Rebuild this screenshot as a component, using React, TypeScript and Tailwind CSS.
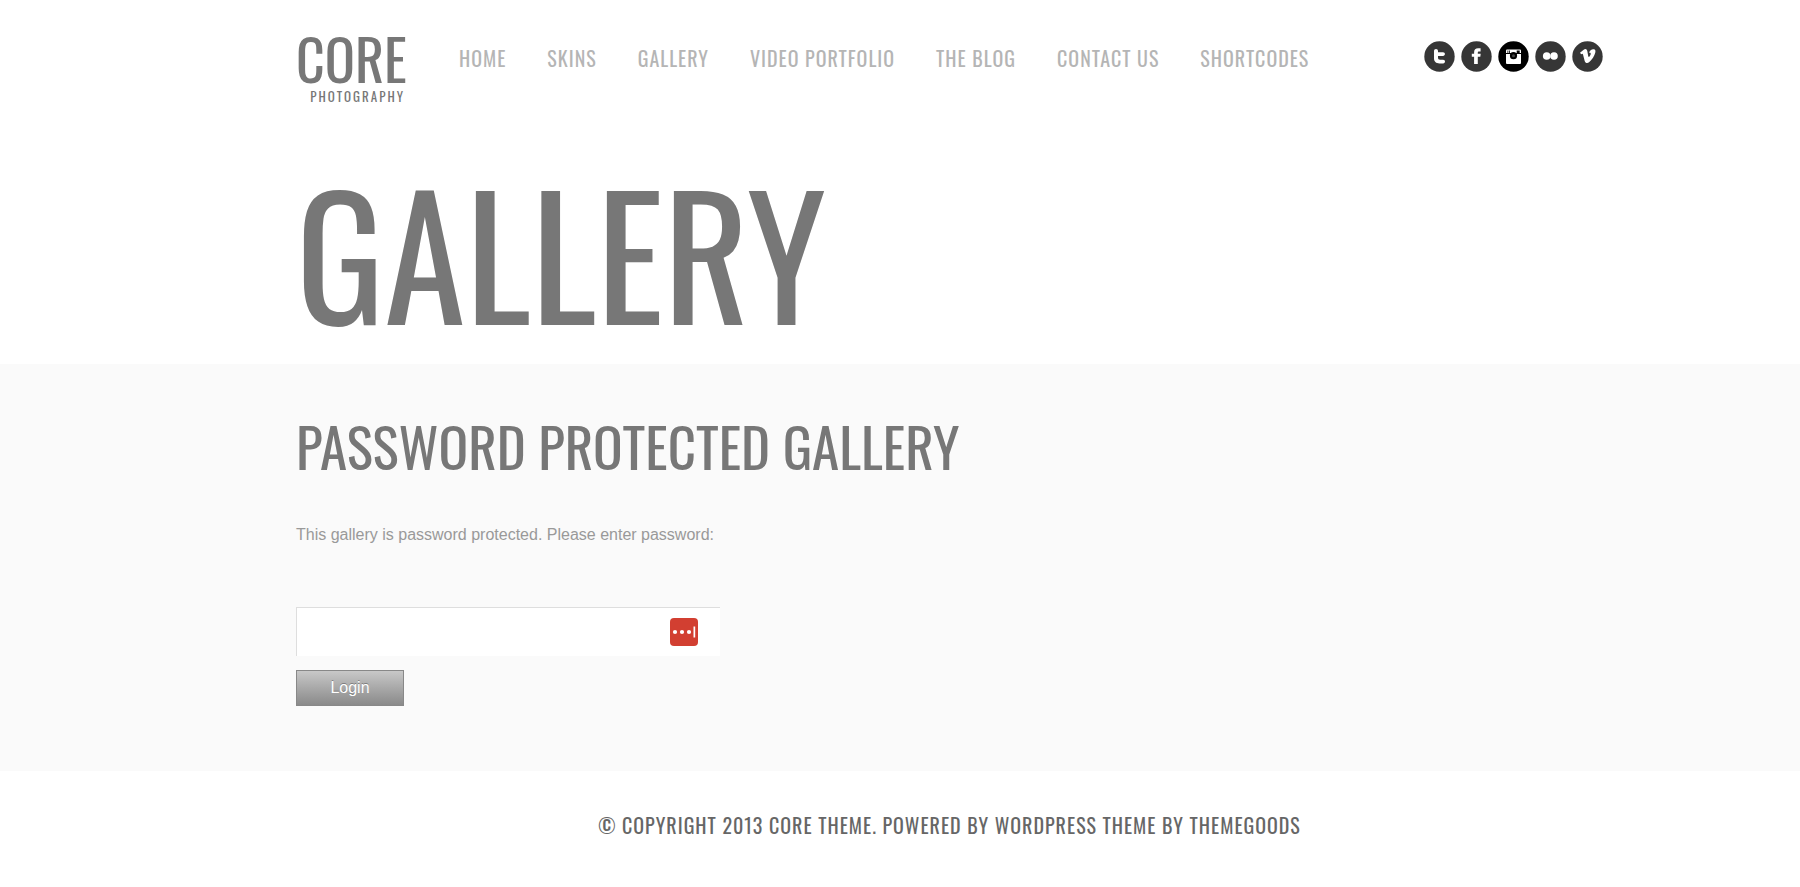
import type { ReactNode } from "react";

const NAV_ITEMS = [
  "Home",
  "Skins",
  "Gallery",
  "Video Portfolio",
  "The Blog",
  "Contact Us",
  "Shortcodes",
];

const HEADING_FONT = "font-['Oswald','Liberation_Sans_Narrow','Liberation_Sans',sans-serif] uppercase";

function Container({ children, className = "" }: { children: ReactNode; className?: string }) {
  return (
    <div className="pl-[99px]">
      <div className={`mx-auto max-w-[1307px] ${className}`}>{children}</div>
    </div>
  );
}

function SocialLink({
  label,
  dark = false,
  children,
}: {
  label: string;
  dark?: boolean;
  children: ReactNode;
}) {
  return (
    <a href="#" aria-label={label}>
      <svg viewBox="0 0 31 31" className="size-[31px]" fill="#fff">
        <circle cx="15.5" cy="15.5" r="15.2" fill={dark ? "#000" : "#363636"} />
        {children}
      </svg>
    </a>
  );
}

function SocialLinks() {
  return (
    <div className="flex gap-[6px]">
      <SocialLink label="Twitter">
        <path d="M10 10c0-1.300.8-2 2-2s2 .7 2 2v1.300h5c1.200 0 1.900.7 1.900 1.800s-.7 1.800-1.900 1.800h-5v1.600c0 1.500.7 2.200 2.100 2.200h3c1.200 0 1.900.7 1.900 1.800s-.7 1.900-1.900 1.900h-3.600c-3.500 0-5.500-1.900-5.500-5.200z" />
      </SocialLink>
      <SocialLink label="Facebook">
        <path d="M13.100 23v-7.200h-2.300v-3h2.300v-1.500c0-2.700 1.500-4 4-4h2.500v3.100h-1.500c-1 0-1.300.4-1.300 1.200v1.200h2.900l-.4 3h-2.500V23z" />
      </SocialLink>
      <SocialLink label="Instagram" dark>
        <rect x="8" y="8.500" width="15" height="14.500" rx="1" />
        <path d="M8 12h15v1H8zM9.500 9.500h.8V12h-.8zM11.200 9.500h.8V12h-.8zM18.700 9.500h3V12h-3z" fill="#000" />
        <circle cx="15.500" cy="14.700" r="3.600" fill="#000" />
        <circle cx="15.500" cy="14.700" r="1.500" fill="#444" />
      </SocialLink>
      <SocialLink label="Flickr">
        <circle cx="11.700" cy="15" r="3.800" />
        <circle cx="19" cy="15" r="3.800" />
      </SocialLink>
      <SocialLink label="Vimeo">
        <path d="M8 11.700l3.700-3c1.700-1.200 3.200-.6 3.600 1.400l.9 4.800c.4 1.400.8 1.400 1.500.3.900-1.400 1.300-2.400.9-3-.3-.4-.9-.4-1.500-.2.600-2.600 2.500-3.900 4.600-3.700 1.700.2 2 1.500 1.600 3.300-.7 3.300-3.400 7.200-6 9.500-2 1.600-3.900 1-4.600-1.200l-1.700-6.300c-.3-1-.8-1-1.800-.3z" />
      </SocialLink>
    </div>
  );
}

function Header() {
  return (
    <header>
      <Container className="flex items-start pt-7">
        <a href="#" className={`${HEADING_FONT} w-[109px] text-[#777]`}>
          <span className="block text-[56px] leading-[60px]">Core</span>
          <span className="block text-right text-[13px] leading-4 tracking-[2px]">Photography</span>
        </a>
        <nav
          className={`${HEADING_FONT} ml-[54px] flex gap-[41px] pt-[18px] text-xl leading-6 tracking-[1px] text-[#b5b5b5]`}
        >
          {NAV_ITEMS.map((item) => (
            <a key={item} href="#" className="whitespace-nowrap">
              {item}
            </a>
          ))}
        </nav>
        <div className="ml-auto pt-[13px]">
          <SocialLinks />
        </div>
      </Container>
    </header>
  );
}

function PasswordForm() {
  return (
    <form onSubmit={(e) => e.preventDefault()}>
      <label
        htmlFor="gallery-password"
        className="block font-['Liberation_Sans',Arial,sans-serif] text-base leading-6 text-[#999]"
      >
        This gallery is password protected. Please enter password:
      </label>
      <div className="relative mt-[60px] w-[424px]">
        <input
          id="gallery-password"
          type="password"
          className="block h-[49px] w-full border-t border-l border-[#dedede] bg-white px-3 pr-14 text-base text-[#777] outline-none"
        />
        <svg viewBox="0 0 28 28" className="absolute top-[11px] right-[22px] size-7" fill="#fff">
          <rect width="28" height="28" rx="4" fill="#d23f31" />
          <circle cx="5" cy="14" r="2.100" />
          <circle cx="12" cy="14" r="2.100" />
          <circle cx="19" cy="14" r="2.100" />
          <rect x="23.500" y="8.500" width="1.700" height="11" />
        </svg>
      </div>
      <button
        type="submit"
        className="mt-[14px] h-9 w-[108px] border border-[#888] bg-linear-to-b from-[#c8c8c8] to-[#8a8a8a] font-['Liberation_Sans',Arial,sans-serif] text-base text-white text-shadow-[0_-1px_0_rgba(0,0,0,0.3)]"
      >
        Login
      </button>
    </form>
  );
}

export default function App() {
  return (
    <div className="min-h-screen bg-white">
      <Header />
      <Container className="pt-[47px] pb-[13px]">
        <h1 className={`${HEADING_FONT} text-[165px] leading-[200px] text-[#777]`}>Gallery</h1>
      </Container>
      <main className="bg-[#fafafa] pt-[41px] pb-[65px]">
        <Container>
          <h2 className={`${HEADING_FONT} mb-[38px] text-[55px] leading-[80px] text-[#777]`}>
            Password Protected Gallery
          </h2>
          <PasswordForm />
        </Container>
      </main>
      <footer className="py-[42px]">
        <Container>
          <p className={`${HEADING_FONT} text-center text-xl leading-6 tracking-[1px] text-[#666]`}>
            © Copyright 2013 Core Theme. Powered by WordPress Theme by ThemeGoods
          </p>
        </Container>
      </footer>
    </div>
  );
}
